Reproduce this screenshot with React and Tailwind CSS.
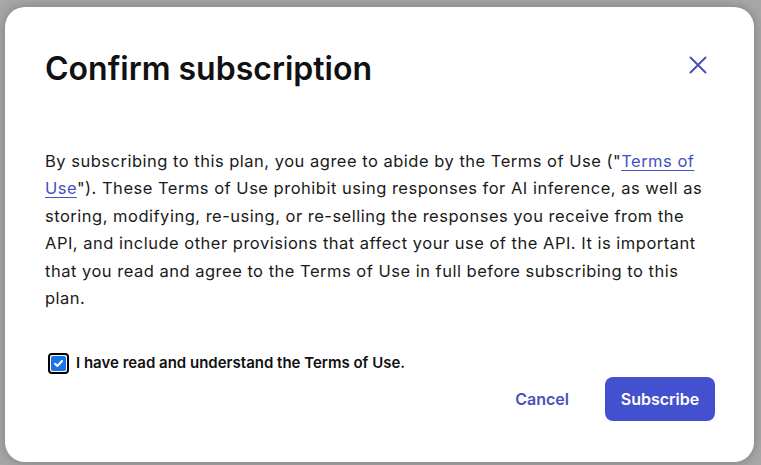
import React, { useState } from "react";

export default function App() {
  const [agreed, setAgreed] = useState(true);

  return (
    <div
      className="h-[465px] w-[761px] overflow-hidden bg-[#a7a7a7] pl-[5px] pt-[7px]"
      style={{ fontFamily: "Inter, 'Liberation Sans', sans-serif" }}
    >
      <div className="flex h-[455px] w-[749px] flex-col rounded-[20px] bg-white pl-10 pr-[39px] pt-[42px] shadow-[0_0_12px_rgba(0,0,0,0.25)]">
        <div className="flex items-start justify-between">
          <h1 className="text-[32px] font-semibold leading-[40px] text-[#111]">Confirm subscription</h1>
          <button type="button" className="mr-[8px] mt-[7px] text-[#4b50b5]" aria-label="Close">
            <svg width="18" height="18" viewBox="0 0 18 18" fill="none" stroke="currentColor" strokeWidth="2" strokeLinecap="round">
              <path d="M1.5 1.5 L16.5 16.5 M16.5 1.5 L1.5 16.5" />
            </svg>
          </button>
        </div>

        <p className="mt-[59px] pr-px text-[16.5px] leading-[27.4px] tracking-[0.5px] text-[#1a1a1a]">
          By subscribing to this plan, you agree to abide by the Terms of Use ("
          <a href="#" className="text-[#4450c6] underline underline-offset-[3px]">
            Terms of Use
          </a>
          "). These Terms of Use prohibit using responses for AI inference, as well as storing, modifying, re-using, or
          re-selling the responses you receive from the API, and include other provisions that affect your use of the
          API. It is important that you read and agree to the Terms of Use in full before subscribing to this plan.
        </p>

        <label className="mt-[40px] flex items-center gap-[7px] pl-[3px]">
          <span
            onClick={() => setAgreed((v) => !v)}
            className="flex h-[21px] w-[21px] items-center justify-center rounded-[4px] border-2 border-black"
          >
            <span className="flex h-[15px] w-[15px] items-center justify-center rounded-[2px] bg-[#1a73e8]">
              {agreed && (
                <svg width="11" height="11" viewBox="0 0 11 11" fill="none" stroke="white" strokeWidth="2" strokeLinecap="round" strokeLinejoin="round">
                  <path d="M2 5.8 L4.4 8 L9 3" />
                </svg>
              )}
            </span>
          </span>
          <span className="text-[15px] font-semibold text-[#111]">I have read and understand the Terms of Use.</span>
        </label>

        <div className="mt-[2px] flex items-center justify-end gap-[36px]">
          <button type="button" className="text-[16px] font-semibold text-[#4a51b8]">
            Cancel
          </button>
          <button
            type="button"
            className="h-[44px] w-[110px] rounded-[8px] bg-[#4350cf] text-[16px] font-semibold text-white"
          >
            Subscribe
          </button>
        </div>
      </div>
    </div>
  );
}
